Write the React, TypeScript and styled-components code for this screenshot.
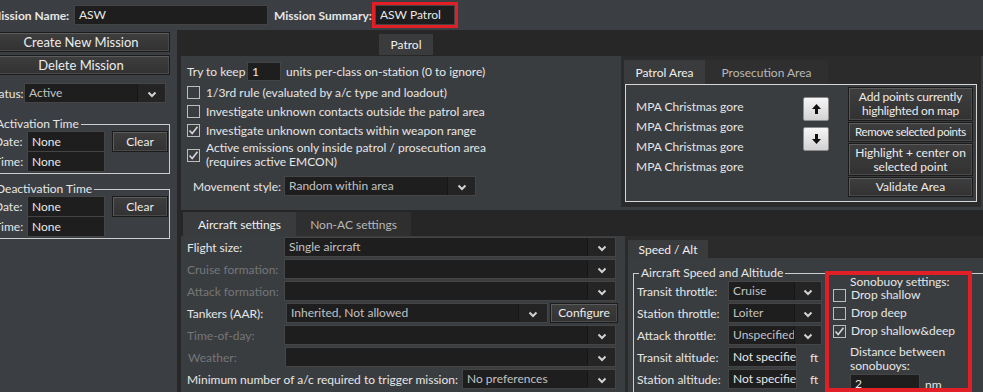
import React from "react";
import styled, { createGlobalStyle } from "styled-components";

const FONT = `Lato, "Open Sans", "Liberation Sans", sans-serif`;

const GlobalStyle = createGlobalStyle`
  html, body {
    margin: 0;
    padding: 0;
    background: #3b3e42;
    overflow: hidden;
  }
  body {
    font-family: ${FONT};
    font-size: 12px;
    color: #e6e6e6;
  }
`;

const Root = styled.div`
  width: 993px;
  height: 392px;
  margin-left: -10px;
  display: flex;
  flex-direction: column;
  overflow: hidden;
`;

const TopBar = styled.div`
  height: 30px;
  display: flex;
  align-items: center;
  flex-shrink: 0;
`;

const BoldLabel = styled.span<{ $w: number }>`
  width: ${(p) => p.$w}px;
  font-weight: 700;
  white-space: nowrap;
  flex-shrink: 0;
`;

const Field = styled.div<{ $w: number; $h?: number }>`
  width: ${(p) => p.$w}px;
  height: ${(p) => p.$h ?? 20}px;
  box-sizing: border-box;
  background: #1e1e1e;
  border: 1px solid #444;
  padding: 0 4px;
  line-height: ${(p) => (p.$h ?? 20) - 2}px;
  color: #e8e8e8;
  white-space: nowrap;
  overflow: hidden;
  flex-shrink: 0;
`;

const Highlight = styled.div<{ $b: number }>`
  border: ${(p) => p.$b}px solid #e21f26;
  flex-shrink: 0;
`;

const Body = styled.div`
  flex: 1;
  display: flex;
  min-height: 0;
`;

/* ---------- left panel ---------- */

const LeftPanel = styled.div`
  width: 187px;
  box-sizing: border-box;
  padding: 2px 7px 0 2px;
  display: flex;
  flex-direction: column;
  flex-shrink: 0;
`;

const Btn = styled.button<{ $w?: number; $h?: number; $fs?: number; $ls?: number }>`
  width: ${(p) => (p.$w ? `${p.$w}px` : "100%")};
  height: ${(p) => p.$h ?? 20}px;
  box-sizing: border-box;
  padding: 0;
  font-family: ${FONT};
  font-size: ${(p) => p.$fs ?? 12}px;
  letter-spacing: ${(p) => p.$ls ?? 0}px;
  line-height: 14px;
  color: #ececec;
  white-space: nowrap;
  background: linear-gradient(#3e3e3e, #323232);
  border: 1px solid #1b1b1b;
  box-shadow: inset 1px 1px 0 #5c5c5c, inset -1px -1px 0 #4a4a4a;
  flex-shrink: 0;
`;

const Row = styled.div<{ $gap?: number; $mt?: number }>`
  display: flex;
  align-items: center;
  height: 20px;
  gap: ${(p) => p.$gap ?? 0}px;
  margin-top: ${(p) => p.$mt ?? 0}px;
  flex-shrink: 0;
`;

const Label = styled.span<{ $w?: number; $dim?: boolean; $ml?: number }>`
  width: ${(p) => (p.$w ? `${p.$w}px` : "auto")};
  margin-left: ${(p) => p.$ml ?? 0}px;
  color: ${(p) => (p.$dim ? "#74767a" : "#e6e6e6")};
  white-space: nowrap;
  flex-shrink: 0;
`;

const Group = styled.fieldset<{ $mt: number }>`
  margin: ${(p) => p.$mt}px 0 0 -3px;
  padding: 0 0 1px 4px;
  border: 1px solid #cdcdcd;
  min-width: 0;
`;

const Legend = styled.legend`
  padding: 0 2px;
  margin-left: 0;
  line-height: 14px;
  white-space: nowrap;
`;

const GroupRow = styled.div`
  display: flex;
  align-items: flex-start;
`;

const DateCol = styled.div`
  display: flex;
  flex-direction: column;
`;

/* ---------- main area ---------- */

const Main = styled.div`
  flex: 1;
  background: #272727;
  display: flex;
  flex-direction: column;
`;

const Strip = styled.div<{ $h: number; $pl: number; $pt: number; $bg?: string }>`
  height: ${(p) => p.$h}px;
  box-sizing: border-box;
  padding: ${(p) => p.$pt}px 0 0 ${(p) => p.$pl}px;
  background: ${(p) => p.$bg ?? "#272727"};
  display: flex;
  align-items: flex-start;
  flex-shrink: 0;
`;

const Tab = styled.div<{ $w: number; $h: number; $active?: boolean }>`
  width: ${(p) => p.$w}px;
  height: ${(p) => p.$h}px;
  background: ${(p) => (p.$active ? "#3a3b3d" : "#2f2f2f")};
  color: ${(p) => (p.$active ? "#f0f0f0" : "#b8b8b8")};
  display: flex;
  align-items: center;
  justify-content: center;
  flex-shrink: 0;
`;

const Page = styled.div`
  flex: 1;
  margin-left: 4px;
  background: #3a3d40;
  display: flex;
  flex-direction: column;
`;

const TopRow = styled.div`
  height: 154px;
  display: flex;
  flex-shrink: 0;
`;

const ChecksCol = styled.div`
  width: 440px;
  box-sizing: border-box;
  padding: 6px 0 0 6px;
  display: flex;
  flex-direction: column;
`;

const CheckRow = styled.div<{ $h: number; $gap?: number }>`
  height: ${(p) => p.$h}px;
  display: flex;
  align-items: center;
  gap: ${(p) => p.$gap ?? 6}px;
  line-height: 14px;
`;

const Box = styled.span`
  width: 13px;
  height: 13px;
  box-sizing: border-box;
  border: 1px solid #bdbdbd;
  display: inline-flex;
  align-items: center;
  justify-content: center;
  flex-shrink: 0;
`;

const AreaCtl = styled.div`
  width: 360px;
  height: 151px;
  box-sizing: border-box;
  padding: 4px 4px 5px 4px;
  background: #2b2b2b;
  display: flex;
  flex-direction: column;
`;

const TabRow = styled.div`
  display: flex;
  height: 24px;
  flex-shrink: 0;
`;

const AreaBox = styled.div`
  flex: 1;
  border: 1px solid #d6d6d6;
  background: #3a3d40;
  display: flex;
`;

const PointList = styled.div`
  width: 177px;
  box-sizing: border-box;
  padding: 12px 0 0 10px;
  line-height: 20px;
`;

const ArrowCol = styled.div`
  margin-top: 12px;
  display: flex;
  flex-direction: column;
  gap: 6px;
`;

const ArrowBtn = styled.div`
  width: 26px;
  height: 24px;
  box-sizing: border-box;
  border: 1px solid #8c8c8c;
  border-radius: 2px;
  background: linear-gradient(#f6f6f6, #d2d2d2);
  display: flex;
  align-items: center;
  justify-content: center;
`;

const ActionCol = styled.div`
  margin-left: 19px;
  padding-top: 2px;
  width: 125px;
  display: flex;
  flex-direction: column;
  gap: 1px;
`;

const AircraftCtl = styled.div`
  flex: 1;
  display: flex;
  flex-direction: column;
  min-height: 0;
`;

const ACPage = styled.div`
  flex: 1;
  display: flex;
  background: #3a3d40;
`;

const SettingsCol = styled.div`
  width: 436px;
  box-sizing: border-box;
  padding: 1px 0 0 6px;
  display: flex;
  flex-direction: column;
  gap: 2px;
`;

const SpeedCtl = styled.div`
  margin-left: 8px;
  flex: 1;
  background: #2b2b2b;
  padding-left: 3px;
  display: flex;
  flex-direction: column;
`;

const SpeedPage = styled.div`
  flex: 1;
  background: #3a3d40;
  padding: 8px 0 0 5px;
  overflow: hidden;
`;

const SpeedGroup = styled.fieldset`
  margin: 0;
  padding: 0 0 0 3px;
  border: 1px solid #cdcdcd;
  border-right: none;
  border-bottom: none;
  min-width: 0;
`;

const SpeedLegend = styled.legend`
  padding: 0 2px;
  margin-left: 2px;
  line-height: 14px;
`;

const SpeedInner = styled.div`
  display: flex;
  align-items: flex-start;
`;

const SpeedRows = styled.div`
  padding-top: 1px;
  display: flex;
  flex-direction: column;
  gap: 2px;
`;

const Unit = styled.span`
  margin-left: 13px;
`;

const SonoBox = styled.div`
  margin: -9px 0 0 3px;
  width: 147px;
  height: 121px;
  box-sizing: border-box;
  border: 4px solid #e21f26;
  padding: 0 0 0 4px;
  overflow: hidden;
  display: flex;
  flex-direction: column;
`;

const SonoHead = styled.div`
  margin-left: 17px;
  height: 13px;
  line-height: 13px;
  white-space: nowrap;
`;

const SonoChecks = styled.div`
  display: flex;
  flex-direction: column;
  gap: 4px;
`;

const SonoText = styled.div`
  margin: 7px 0 0 17px;
  line-height: 14px;
`;

const SonoInput = styled.div`
  margin: 1px 0 0 17px;
  display: flex;
  align-items: center;
  gap: 5px;
`;

/* ---------- helpers ---------- */

const Chevron = () => (
  <svg width="10" height="7" viewBox="0 0 10 7" style={{ marginTop: 3 }}>
    <path d="M1.5 1.5 L5 5 L8.5 1.5" fill="none" stroke="#d2d2d2" strokeWidth="2" />
  </svg>
);

const SelectBox = styled.div<{ $w: number }>`
  width: ${(p) => p.$w}px;
  height: 20px;
  box-sizing: border-box;
  background: #1e1e1e;
  border: 1px solid #454545;
  display: flex;
  flex-shrink: 0;
`;

const SelectText = styled.div`
  flex: 1;
  min-width: 0;
  padding-left: 4px;
  line-height: 18px;
  color: #c2c2c2;
  white-space: nowrap;
  overflow: hidden;
`;

const SelectArrow = styled.div<{ $w?: number }>`
  width: ${(p) => p.$w ?? 27}px;
  background: #242424;
  border-left: 1px solid #161616;
  display: flex;
  align-items: center;
  justify-content: center;
  flex-shrink: 0;
`;

const Select = ({ w, value, aw }: { w: number; value?: string; aw?: number }) => (
  <SelectBox $w={w}>
    <SelectText>{value}</SelectText>
    <SelectArrow $w={aw}>
      <Chevron />
    </SelectArrow>
  </SelectBox>
);

const Check = ({ on }: { on?: boolean }) => (
  <Box>
    {on && (
      <svg width="11" height="11" viewBox="0 0 11 11">
        <polyline points="1.5,5.5 4.2,8.5 9.5,1.8" fill="none" stroke="#d6d6d6" strokeWidth="1.6" />
      </svg>
    )}
  </Box>
);

const Arrow = ({ down }: { down?: boolean }) => (
  <svg width="9" height="10" viewBox="0 0 9 10" style={{ transform: down ? "rotate(180deg)" : undefined }}>
    <path d="M4.5 0 L9 5 L6 5 L6 10 L3 10 L3 5 L0 5 Z" fill="#111" />
  </svg>
);

const points = ["MPA Christmas gore", "MPA Christmas gore", "MPA Christmas gore", "MPA Christmas gore"];

const TimeGroup = ({ title, mt }: { title: string; mt: number }) => (
  <Group $mt={mt}>
    <Legend>{title}</Legend>
    <GroupRow>
      <DateCol>
        <Row>
          <Label $w={33}>Date:</Label>
          <Field $w={78} $h={21}>None</Field>
        </Row>
        <Row style={{ height: 21 }}>
          <Label $w={33}>Time:</Label>
          <Field $w={78} $h={21}>None</Field>
        </Row>
      </DateCol>
      <Btn $w={56} $h={21} style={{ marginLeft: 7 }}>
        Clear
      </Btn>
    </GroupRow>
  </Group>
);

export default function App() {
  return (
    <>
      <GlobalStyle />
      <Root>
        <TopBar>
          <BoldLabel $w={84}>Mission Name:</BoldLabel>
          <Field $w={194}>ASW</Field>
          <BoldLabel $w={98} style={{ marginLeft: 6 }}>
            Mission Summary:
          </BoldLabel>
          <Highlight $b={3}>
            <Field $w={80}>ASW Patrol</Field>
          </Highlight>
        </TopBar>

        <Body>
          <LeftPanel>
            <Btn $fs={13}>Create New Mission</Btn>
            <Btn $fs={13} style={{ marginTop: 3 }}>
              Delete Mission
            </Btn>
            <Row $mt={8}>
              <Label $w={36} $ml={-4}>
                Status:
              </Label>
              <Select w={142} value="Active" />
            </Row>
            <TimeGroup title="Activation Time" mt={14} />
            <TimeGroup title="Deactivation Time" mt={8} />
          </LeftPanel>

          <Main>
            <Strip $h={26} $pl={202} $pt={4}>
              <Tab $w={54} $h={21} $active>
                Patrol
              </Tab>
            </Strip>
            <Page>
              <TopRow>
                <ChecksCol>
                  <Row style={{ height: 19 }}>
                    <Label $w={60}>Try to keep</Label>
                    <Field $w={34} $h={19}>
                      1
                    </Field>
                    <Label $ml={5}>units per-class on-station (0 to ignore)</Label>
                  </Row>
                  <CheckRow $h={19} style={{ marginTop: 2 }}>
                    <Check />
                    <span>1/3rd rule (evaluated by a/c type and loadout)</span>
                  </CheckRow>
                  <CheckRow $h={19}>
                    <Check />
                    <span>Investigate unknown contacts outside the patrol area</span>
                  </CheckRow>
                  <CheckRow $h={19}>
                    <Check on />
                    <span>Investigate unknown contacts within weapon range</span>
                  </CheckRow>
                  <CheckRow $h={30}>
                    <Check on />
                    <span>
                      Active emissions only inside patrol / prosecution area
                      <br />
                      (requires active EMCON)
                    </span>
                  </CheckRow>
                  <Row $mt={6}>
                    <Label $w={91} $ml={6}>
                      Movement style:
                    </Label>
                    <Select w={192} value="Random within area" />
                  </Row>
                </ChecksCol>

                <AreaCtl>
                  <TabRow>
                    <Tab $w={81} $h={24} $active style={{ marginLeft: -1 }}>
                      Patrol Area
                    </Tab>
                    <Tab $w={123} $h={24}>
                      Prosecution Area
                    </Tab>
                  </TabRow>
                  <AreaBox>
                    <PointList>
                      {points.map((p, i) => (
                        <div key={i}>{p}</div>
                      ))}
                    </PointList>
                    <ArrowCol>
                      <ArrowBtn>
                        <Arrow />
                      </ArrowBtn>
                      <ArrowBtn>
                        <Arrow down />
                      </ArrowBtn>
                    </ArrowCol>
                    <ActionCol>
                      <Btn $h={34} $ls={-0.2}>
                        Add points currently
                        <br />
                        highlighted on map
                      </Btn>
                      <Btn $h={20} $fs={11.5} $ls={-0.4}>
                        Remove selected points
                      </Btn>
                      <Btn $h={33}>
                        Highlight + center on
                        <br />
                        selected point
                      </Btn>
                      <Btn $h={20}>Validate Area</Btn>
                    </ActionCol>
                  </AreaBox>
                </AreaCtl>
              </TopRow>

              <AircraftCtl>
                <Strip $h={26} $pl={2} $pt={2} $bg="#262626">
                  <Tab $w={113} $h={24} $active>
                    Aircraft settings
                  </Tab>
                  <Tab $w={115} $h={24}>
                    Non-AC settings
                  </Tab>
                </Strip>
                <ACPage>
                  <SettingsCol>
                    <Row>
                      <Label $w={97}>Flight size:</Label>
                      <Select w={332} value="Single aircraft" />
                    </Row>
                    <Row>
                      <Label $w={97} $dim>
                        Cruise formation:
                      </Label>
                      <Select w={332} />
                    </Row>
                    <Row>
                      <Label $w={97} $dim>
                        Attack formation:
                      </Label>
                      <Select w={332} />
                    </Row>
                    <Row $gap={2}>
                      <Label $w={97}>Tankers (AAR):</Label>
                      <Select w={262} value="Inherited, Not allowed" aw={28} />
                      <Btn $w={68} $h={20}>
                        Configure
                      </Btn>
                    </Row>
                    <Row>
                      <Label $w={97} $dim>
                        Time-of-day:
                      </Label>
                      <Select w={332} />
                    </Row>
                    <Row>
                      <Label $w={97} $dim $ml={1}>
                        Weather:
                      </Label>
                      <Select w={331} />
                    </Row>
                    <Row>
                      <Label $w={275}>Minimum number of a/c required to trigger mission:</Label>
                      <Select w={154} value="No preferences" />
                    </Row>
                  </SettingsCol>

                  <SpeedCtl>
                    <Strip $h={22} $pl={0} $pt={4} $bg="#2b2b2b">
                      <Tab $w={80} $h={18} $active>
                        Speed / Alt
                      </Tab>
                    </Strip>
                    <SpeedPage>
                      <SpeedGroup>
                        <SpeedLegend>Aircraft Speed and Altitude</SpeedLegend>
                        <SpeedInner>
                          <SpeedRows>
                            <Row>
                              <Label $w={91}>Transit throttle:</Label>
                              <Select w={94} value="Cruise" aw={26} />
                            </Row>
                            <Row>
                              <Label $w={91}>Station throttle:</Label>
                              <Select w={94} value="Loiter" aw={26} />
                            </Row>
                            <Row>
                              <Label $w={91}>Attack throttle:</Label>
                              <Select w={94} value="Unspecified" aw={26} />
                            </Row>
                            <Row>
                              <Label $w={91}>Transit altitude:</Label>
                              <Field $w={69}>Not specified</Field>
                              <Unit>ft</Unit>
                            </Row>
                            <Row>
                              <Label $w={91}>Station altitude:</Label>
                              <Field $w={69}>Not specified</Field>
                              <Unit>ft</Unit>
                            </Row>
                          </SpeedRows>
                          <SonoBox>
                            <SonoHead>Sonobuoy settings:</SonoHead>
                            <SonoChecks>
                              <CheckRow $h={14} $gap={5}>
                                <Check />
                                <span>Drop shallow</span>
                              </CheckRow>
                              <CheckRow $h={14} $gap={5}>
                                <Check />
                                <span>Drop deep</span>
                              </CheckRow>
                              <CheckRow $h={14} $gap={5}>
                                <Check on />
                                <span>Drop shallow&amp;deep</span>
                              </CheckRow>
                            </SonoChecks>
                            <SonoText>
                              Distance between
                              <br />
                              sonobuoys:
                            </SonoText>
                            <SonoInput>
                              <Field $w={70}>2</Field>
                              <span>nm</span>
                            </SonoInput>
                          </SonoBox>
                        </SpeedInner>
                      </SpeedGroup>
                    </SpeedPage>
                  </SpeedCtl>
                </ACPage>
              </AircraftCtl>
            </Page>
          </Main>
        </Body>
      </Root>
    </>
  );
}
